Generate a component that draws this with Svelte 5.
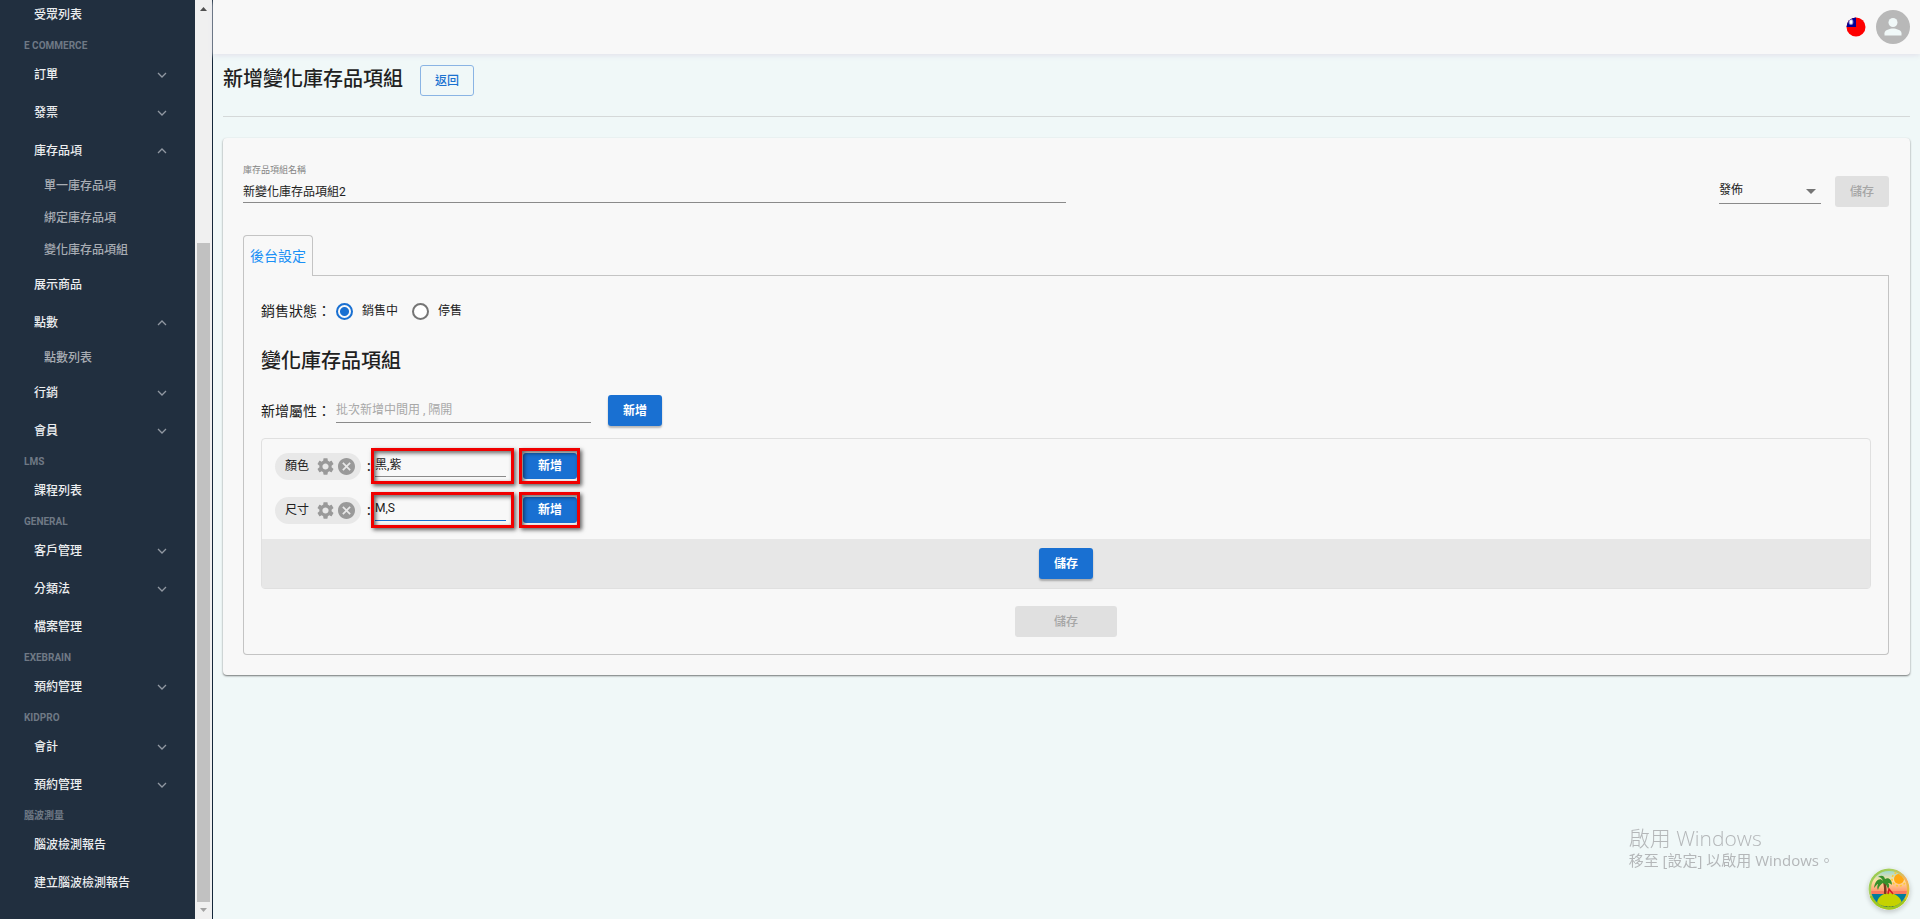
<script lang="ts">
  type Entry = { label: string; kind: "item" | "sub" | "head"; open?: boolean; group?: boolean };

  const head = (label: string): Entry => ({ label, kind: "head" });
  const sub = (label: string): Entry => ({ label, kind: "sub" });
  const item = (label: string): Entry => ({ label, kind: "item" });
  const group = (label: string, open = false): Entry => ({ label, kind: "item", group: true, open });

  const entries: Entry[] = [
    item("受眾列表"),
    head("E COMMERCE"),
    group("訂單"),
    group("發票"),
    group("庫存品項", true),
    sub("單一庫存品項"),
    sub("綁定庫存品項"),
    sub("變化庫存品項組"),
    item("展示商品"),
    group("點數", true),
    sub("點數列表"),
    group("行銷"),
    group("會員"),
    head("LMS"),
    item("課程列表"),
    head("GENERAL"),
    group("客戶管理"),
    group("分類法"),
    item("檔案管理"),
    head("EXEBRAIN"),
    group("預約管理"),
    head("KIDPRO"),
    group("會計"),
    group("預約管理"),
    head("腦波測量"),
    item("腦波檢測報告"),
    item("建立腦波檢測報告"),
  ];

  let name = $state("新變化庫存品項組2");
  let status = $state("publish");
  let sale = $state("on");
  let newAttrs = $state("");
  let attrs = $state([
    { label: "顏色", value: "黑,紫", active: false },
    { label: "尺寸", value: "M,S", active: true },
  ]);

  const remove = (label: string) => {
    attrs = attrs.filter((a) => a.label !== label);
  };
</script>

<div class="app">
  <aside>
    <nav>
      {#each entries as e}
        {#if e.kind === "head"}
          <h6>{e.label}</h6>
        {:else}
          <a href="#top" class={e.kind}>
            <span>{e.label}</span>
            {#if e.group}
              <svg class:open={e.open} class="chevron" viewBox="0 0 10 6" width="10" height="6">
                <path d="M1 1l4 4 4-4" />
              </svg>
            {/if}
          </a>
        {/if}
      {/each}
    </nav>
    <div class="scrollbar">
      <svg viewBox="0 0 7 4" width="7" height="4"><path d="M0 4L3.5 0 7 4z" fill="#505050" /></svg>
      <div class="thumb"></div>
      <svg viewBox="0 0 7 4" width="7" height="4"><path d="M0 0h7L3.5 4z" fill="#a3a3a3" /></svg>
    </div>
  </aside>

  <div class="page">
    <header>
      <button class="icon" aria-label="語言">
        <svg viewBox="0 0 20 20" width="20" height="20">
          <clipPath id="round"><circle cx="10" cy="10" r="9.5" /></clipPath>
          <g clip-path="url(#round)">
            <path fill="#fe0000" d="M0 0h20v20H0z" />
            <path fill="#000095" d="M0 0h10v10H0z" />
            <ellipse cx="5" cy="5" rx="2.4" ry="3" fill="#8c8cd0" />
            <ellipse cx="5" cy="5" rx="1.4" ry="2" fill="#fff" />
          </g>
        </svg>
      </button>
      <button class="icon" aria-label="帳號">
        <svg viewBox="0 0 34 34" width="34" height="34">
          <circle cx="17" cy="17" r="17" fill="#b8b8b8" />
          <circle cx="17" cy="12.5" r="4.5" fill="#f0f8f8" />
          <path d="M8.500 25.500v-2.300c0-3 5.700-4.600 8.500-4.600s8.500 1.600 8.500 4.600v2.300z" fill="#f0f8f8" />
        </svg>
      </button>
    </header>

    <main>
      <div class="title">
        <h1>新增變化庫存品項組</h1>
        <button class="btn outlined">返回</button>
      </div>

      <section class="card">
        <div class="top">
          <div class="field">
            <label for="name">庫存品項組名稱</label>
            <input id="name" type="text" bind:value={name} />
          </div>
          <div class="publish">
            <div class="select">
              <select aria-label="狀態" bind:value={status}>
                <option value="publish">發佈</option>
                <option value="draft">草稿</option>
              </select>
              <svg viewBox="0 0 10 5" width="10" height="5"><path d="M0 0h10L5 5z" fill="#757575" /></svg>
            </div>
            <button class="btn" disabled>儲存</button>
          </div>
        </div>

        <div class="tabs">
          <button class="tab">後台設定</button>
          <div class="line"></div>
        </div>
        <div class="panel">
          <div class="row sale">
            <span class="caption">銷售狀態：</span>
            <label><input type="radio" name="sale" value="on" bind:group={sale} /><span>銷售中</span></label>
            <label><input type="radio" name="sale" value="off" bind:group={sale} /><span>停售</span></label>
          </div>

          <h2>變化庫存品項組</h2>

          <div class="row add">
            <label class="caption" for="attrs">新增屬性：</label>
            <input id="attrs" type="text" placeholder="批次新增中間用 , 隔開" bind:value={newAttrs} />
            <button class="btn primary">新增</button>
          </div>

          <div class="box">
            <div class="attrs">
              {#each attrs as attr (attr.label)}
                <div class="attr">
                  <div class="chip">
                    <span>{attr.label}</span>
                    <button class="icon" aria-label="設定">
                      <svg viewBox="2 2 20 20" width="17" height="17">
                        <path d="M19.140 12.940c.04-.3.06-.61.06-.94 0-.32-.02-.64-.07-.94l2.030-1.580c.18-.14.23-.41.12-.61l-1.920-3.320c-.12-.22-.37-.29-.59-.22l-2.390.96c-.5-.38-1.030-.7-1.620-.94l-.36-2.540c-.04-.24-.24-.41-.48-.41h-3.840c-.24 0-.43.17-.47.41l-.36 2.540c-.59.24-1.130.57-1.620.94l-2.390-.96c-.22-.08-.47 0-.59.22L2.740 8.870c-.12.21-.08.47.12.61l2.030 1.580c-.05.3-.09.63-.09.94s.02.64.07.94l-2.030 1.580c-.18.14-.23.41-.12.61l1.920 3.320c.12.22.37.29.59.22l2.390-.96c.5.38 1.030.7 1.620.94l.36 2.540c.05.24.24.41.48.41h3.840c.24 0 .44-.17.47-.41l.36-2.540c.59-.24 1.130-.56 1.620-.94l2.390.96c.22.08.47 0 .59-.22l1.920-3.320c.12-.22.07-.47-.12-.61zM12 15.600c-1.980 0-3.600-1.620-3.600-3.600s1.620-3.600 3.600-3.600 3.600 1.620 3.600 3.600-1.620 3.600-3.600 3.600z" />
                      </svg>
                    </button>
                    <button class="icon" aria-label="移除" onclick={() => remove(attr.label)}>
                      <svg viewBox="2 2 20 20" width="17" height="17">
                        <path d="M12 2C6.470 2 2 6.470 2 12s4.470 10 10 10 10-4.470 10-10S17.530 2 12 2zm5 13.590L15.590 17 12 13.410 8.410 17 7 15.590 10.590 12 7 8.410 8.410 7 12 10.590 15.590 7 17 8.410 13.410 12z" />
                      </svg>
                    </button>
                  </div>
                  <span class="colon">:</span>
                  <div class="mark wide">
                    <input type="text" aria-label={attr.label} class:active={attr.active} bind:value={attr.value} />
                  </div>
                  <div class="mark">
                    <button class="btn primary small">新增</button>
                  </div>
                </div>
              {/each}
            </div>
            <div class="foot">
              <button class="btn primary">儲存</button>
            </div>
          </div>

          <button class="btn submit" disabled>儲存</button>
        </div>
      </section>
    </main>
  </div>

  <div class="watermark">
    <p class="big">啟用 Windows</p>
    <p>移至 [設定] 以啟用 Windows。</p>
  </div>

  <button class="icon island" aria-label="開發工具">
    <svg viewBox="0 0 42 42" width="42" height="42">
      <defs>
        <linearGradient id="sky" x1="0" y1="0" x2="0" y2="1">
          <stop offset="0" stop-color="#7fd6e0" />
          <stop offset="0.3" stop-color="#ffe2a0" />
          <stop offset="0.55" stop-color="#ff9a70" />
        </linearGradient>
        <linearGradient id="rim" x1="0" y1="0" x2="1" y2="1">
          <stop offset="0" stop-color="#8cc63f" />
          <stop offset="0.3" stop-color="#a8cf60" />
          <stop offset="0.6" stop-color="#f7b060" />
          <stop offset="1" stop-color="#c5d200" />
        </linearGradient>
        <clipPath id="lens"><circle cx="21" cy="21" r="18" /></clipPath>
      </defs>
      <circle cx="21" cy="21" r="20.500" fill="url(#rim)" />
      <path d="M3 28a19 19 0 0 0 34 3" fill="none" stroke="#9cc820" stroke-width="3" />
      <g clip-path="url(#lens)">
        <path fill="url(#sky)" d="M0 0h42v42H0z" />
        <circle cx="31" cy="11" r="7" fill="none" stroke="#ffc830" stroke-width="1.500" stroke-dasharray="2 2" />
        <circle cx="31" cy="11" r="5" fill="#ffa812" />
        <path fill="#fa7a60" d="M0 23h42v4H0z" />
        <path fill="#007d9c" d="M0 26h42v16H0z" />
        <path fill="#c5d200" d="M9 36c0-7 6-11 12-11s12 4 13 11c-7 4-18 4-25 0z" />
        <path d="M9 36c7 4 18 4 25 0" fill="none" stroke="#2d6a30" stroke-width="1" stroke-dasharray="2 1" />
        <path fill="#9cc820" d="M4 36c9 5 25 5 34 0v8H4z" />
        <path d="M17 26c1-5 0-9-1-13" fill="none" stroke="#7c3a20" stroke-width="2.500" />
        <path fill="#38902c" d="M15 13c-3-4-8-1-9 7 2-2 3-4 4-4-1 3-1 4 0 6 1-4 3-6 5-7 3 1 4 3 5 6 2-3 1-5 0-6 2 0 3 1 4 2 0-6-4-8-7-6-1-4-4-4-7-2 3 0 4 2 5 4z" />
        <path d="M20 26l1-5 4 5" fill="none" stroke="#d02020" stroke-width="1.500" />
      </g>
    </svg>
  </button>
</div>

<style>
  :global(body) {
    margin: 0;
    background: #f0f8f8;
  }

  .app {
    display: flex;
    min-height: 100vh;
    color: #212121;
    font-family: Roboto, "Noto Sans CJK TC", sans-serif;
    font-size: 12px;
    line-height: 18px;
  }

  button,
  input,
  select {
    box-sizing: border-box;
    margin: 0;
    font: inherit;
    color: inherit;
  }

  h1,
  h2,
  h6,
  p {
    margin: 0;
  }

  /* sidebar */
  aside {
    display: flex;
    flex: none;
    height: 100vh;
    width: 213px;
    box-sizing: border-box;
    border-right: 1px solid #14273a;
    background: #212f3f;
    overflow: hidden;
  }

  nav {
    flex: 1;
    margin-top: -4px;
  }

  nav a {
    display: flex;
    align-items: center;
    justify-content: space-between;
    color: #eceef0;
    font-weight: 500;
    text-decoration: none;
  }

  .item {
    height: 38px;
    padding: 0 28px 0 34px;
  }

  nav .sub {
    height: 32px;
    padding-left: 44px;
    color: #a8adb4;
  }

  h6 {
    padding: 3px 24px 1px;
    color: #6f7985;
    font-size: 10px;
    font-weight: 700;
    line-height: 18px;
  }

  .chevron {
    fill: none;
    stroke: #9198a2;
    stroke-width: 1.3;
  }

  .chevron.open {
    transform: rotate(180deg);
  }

  .scrollbar {
    display: flex;
    flex-direction: column;
    align-items: center;
    width: 17px;
    box-sizing: border-box;
    padding: 7px 2px;
    background: #f0f0f0;
  }

  .scrollbar .thumb {
    flex: 1;
    width: 13px;
    margin: 232px 0 6px;
    background: #c1c1c1;
  }

  /* page */
  .page {
    flex: 1;
    min-width: 0;
  }

  header {
    display: flex;
    align-items: center;
    justify-content: flex-end;
    gap: 10px;
    height: 54px;
    padding-right: 10px;
    background: #f8f8f8;
    box-shadow: 0 2px 5px #e4e4ec;
  }

  .icon {
    display: flex;
    padding: 0;
    border: 0;
    background: none;
    cursor: pointer;
  }

  main {
    padding: 11px 10px 20px;
  }

  .title {
    display: flex;
    gap: 17px;
    padding-bottom: 20px;
    border-bottom: 1px solid #d5d9d9;
  }

  h1,
  h2 {
    font-size: 20px;
    font-weight: 500;
    line-height: 28px;
  }

  .btn {
    min-width: 54px;
    height: 31px;
    padding: 0 14px;
    border: 0;
    border-radius: 3px;
    background: #e0e0e0;
    color: #a6a6a6;
    font-weight: 500;
    line-height: 28px;
  }

  .btn.outlined {
    border: 1px solid #8ab4e4;
    background: none;
    color: #1b72d0;
  }

  .btn.primary {
    background: #1970d2;
    color: #fff;
    font-weight: 700;
    box-shadow: 0 2px 2px #0004;
  }

  .btn.small {
    height: 26px;
    line-height: 24px;
    box-shadow: none;
  }

  .card {
    margin-top: 21px;
    padding: 20px 21px 20px 20px;
    border-radius: 4px;
    background: #f8f8f8;
    box-shadow: 0 1px 2px #0008;
  }

  .top {
    display: flex;
    align-items: flex-start;
    justify-content: space-between;
    padding: 3px 0 18px;
  }

  .field {
    flex: 0 0 50%;
    display: flex;
    flex-direction: column;
  }

  .field label {
    color: #858585;
    font-size: 9px;
  }

  input[type="text"] {
    height: 24px;
    padding: 0;
    border: 0;
    border-bottom: 1px solid #8a8a8a;
    border-radius: 0;
    outline: 0;
    background: none;
  }

  input::placeholder {
    color: #a8a8a8;
    opacity: 1;
  }

  .publish {
    display: flex;
    align-items: center;
    gap: 14px;
    padding-top: 15px;
  }

  .select {
    display: flex;
    align-items: center;
    width: 102px;
    border-bottom: 1px solid #8a8a8a;
  }

  .select svg {
    flex: none;
    margin: 0 5px;
  }

  select {
    flex: 1;
    height: 24px;
    padding: 0 0 2px;
    border: 0;
    background: none;
    appearance: none;
  }

  .tabs {
    display: flex;
    align-items: flex-end;
    margin-top: 10px;
  }

  .tab {
    height: 41px;
    padding: 0 6px;
    border: 1px solid #c4c4c4;
    border-bottom: 0;
    border-radius: 4px 4px 0 0;
    background: none;
    color: #1a90f5;
    font-size: 14px;
  }

  .line {
    flex: 1;
    border-top: 1px solid #c4c4c4;
  }

  .panel {
    padding: 21px 17px 17px;
    border: 1px solid #c4c4c4;
    border-top: 0;
    border-radius: 0 0 4px 4px;
  }

  .row {
    display: flex;
    align-items: center;
  }

  .caption {
    margin-right: 5px;
    font-size: 14px;
    line-height: 28px;
  }

  .sale label {
    display: flex;
    align-items: center;
    gap: 9px;
    margin-right: 14px;
  }

  input[type="radio"] {
    width: 17px;
    height: 17px;
    border: 2px solid #757575;
    border-radius: 50%;
    background: #fff;
    appearance: none;
  }

  input[type="radio"]:checked {
    border-color: #1970d2;
    background: radial-gradient(#1970d2 4px, #f8f8f8 5px);
  }

  h2 {
    margin: 22px 0 20px;
  }

  .add input {
    width: 255px;
    height: 25px;
    margin-right: 17px;
  }

  .box {
    margin-top: 12px;
    border: 1px solid #e0e0e0;
    border-radius: 4px;
  }

  .attrs {
    display: flex;
    flex-direction: column;
    gap: 8px;
    padding: 9px 13px 11px;
  }

  .attr {
    display: flex;
    align-items: center;
  }

  .chip {
    display: flex;
    align-items: center;
    gap: 4px;
    height: 27px;
    padding: 0 6px 0 10px;
    border-radius: 14px;
    background: #e8e8e8;
  }

  .chip span {
    margin-right: 4px;
  }

  .chip svg {
    fill: #999;
  }

  .colon {
    width: 4px;
    margin-left: 6px;
    font-size: 14px;
    font-weight: 500;
  }

  .mark {
    position: relative;
    display: flex;
    box-sizing: border-box;
    height: 36px;
    margin-left: 5px;
    padding: 2px 0 2px 1px;
    border: 3px solid #f00000;
    box-shadow: 2px 2px 4px #0009;
  }

  /* inner shadow falls on the control inside the frame */
  .mark::after {
    content: "";
    position: absolute;
    inset: 0;
    box-shadow: inset 2px 2px 4px #0009;
    pointer-events: none;
  }

  .mark.wide {
    width: 143px;
    margin-left: 0;
    padding: 0 5px 0 1px;
  }

  .mark input {
    width: 100%;
    height: 26px;
  }

  .mark input.active {
    border-bottom-color: #1970d2;
  }

  .foot {
    display: flex;
    justify-content: center;
    padding: 9px 8px;
    background: #e7e7e7;
  }

  .submit {
    display: block;
    width: 102px;
    margin: 17px auto 0;
  }

  /* over the page */
  .watermark {
    position: fixed;
    right: 86px;
    bottom: 49px;
    color: #b4b7b9;
    font-family: "Open Sans", "Noto Sans CJK TC", sans-serif;
    font-size: 15px;
    line-height: 20px;
  }

  .watermark .big {
    font-size: 21px;
    font-weight: 300;
    line-height: 24px;
  }

  .island {
    position: fixed;
    right: 10px;
    bottom: 9px;
    border-radius: 50%;
    box-shadow: 0 2px 5px #0003;
  }
</style>
